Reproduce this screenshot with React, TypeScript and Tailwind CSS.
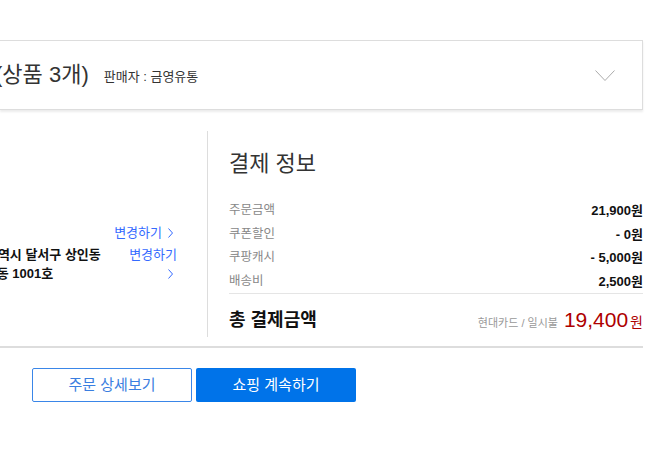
import React from 'react';

const rows = [
    { label: '주문금액', value: '21,900원' },
    { label: '쿠폰할인', value: '- 0원' },
    { label: '쿠팡캐시', value: '- 5,000원' },
    { label: '배송비', value: '2,500원' },
];

const Chevron: React.FC = () => (
    <svg width="5" height="10" viewBox="0 0 5 10" className="inline-block">
        <path d="M0.5 0.5 L4.5 5 L0.5 9.5" fill="none" stroke="#346aff" strokeWidth="1" />
    </svg>
);

const App: React.FC = () => {
    return (
        <div className="w-[672px] h-[462px] overflow-hidden bg-white font-['Liberation_Sans','Noto_Sans_CJK_KR',sans-serif] text-[#111]">
            <div className="w-[643px]">
                {/* Product box */}
                <div className="mt-[40px] h-[70px] flex items-center border border-l-0 border-[#ddd] shadow-[0_2px_2px_rgba(0,0,0,0.08)]">
                    <span className="-ml-[5px] text-[22px] leading-[28px] text-[#333] whitespace-nowrap">(상품 3개)</span>
                    <span className="ml-[15px] mt-[4px] text-[13px] text-[#333]">판매자 : 금영유통</span>
                    <svg width="20" height="12" viewBox="0 0 20 12" className="ml-auto mr-[27px] mt-[2px]">
                        <path d="M0.5 0.5 L10 10.5 L19.5 0.5" fill="none" stroke="#aaa" strokeWidth="1" />
                    </svg>
                </div>

                {/* Address + payment */}
                <div className="flex pt-[21px] border-b-2 border-[#ddd]">
                    <div className="w-[207px] pt-[92px] text-[13px] leading-[19px]">
                        <div className="flex justify-end pr-[34px] text-[#346aff]">
                            <span>변경하기</span>
                            <span className="ml-[6px] flex items-center"><Chevron /></span>
                        </div>
                        <div className="mt-[3px] flex justify-between">
                            <div className="-ml-[38px] font-bold whitespace-nowrap">
                                <div>대구광역시 달서구 상인동</div>
                                <div>상인 1동 1001호</div>
                            </div>
                            <div className="w-[48px] mr-[30px] text-[#346aff]">
                                <div className="text-right">변경하기</div>
                                <div className="flex justify-end pr-[4px] h-[19px] items-center"><Chevron /></div>
                            </div>
                        </div>
                    </div>
                    <div className="w-px h-[206px] bg-[#ddd]" />
                    <div className="flex-1 pl-[21px] pt-[19px]">
                        <h2 className="text-[22px] leading-[28px] text-[#333]">결제 정보</h2>
                        <div className="mt-[21px] border-b border-[#e5e5e5]">
                            {rows.map((r) => (
                                <div key={r.label} className="flex justify-between h-[23.5px] items-center">
                                    <span className="text-[12.5px] text-[#888]">{r.label}</span>
                                    <span className="text-[13px] font-bold">{r.value}</span>
                                </div>
                            ))}
                        </div>
                        <div className="h-[52px] flex items-center justify-between">
                            <span className="text-[18px] font-bold">총 결제금액</span>
                            <div className="flex items-baseline">
                                <span className="text-[11px] text-[#999]">현대카드 / 일시불</span>
                                <span className="ml-[6px] text-[21px] text-[#ae0000]">19,400</span>
                                <span className="ml-[2px] text-[14px] text-[#ae0000]">원</span>
                            </div>
                        </div>
                    </div>
                </div>

                {/* Buttons */}
                <div className="mt-[20px] pl-[32px] flex gap-[4px]">
                    <button className="w-[160px] h-[34px] border border-[#3a86e8] text-[#3a7ee0] text-[15px] rounded-[2px]">주문 상세보기</button>
                    <button className="w-[160px] h-[34px] bg-[#0073e9] text-white text-[15px] rounded-[2px]">쇼핑 계속하기</button>
                </div>
            </div>
        </div>
    );
};

export default App;
